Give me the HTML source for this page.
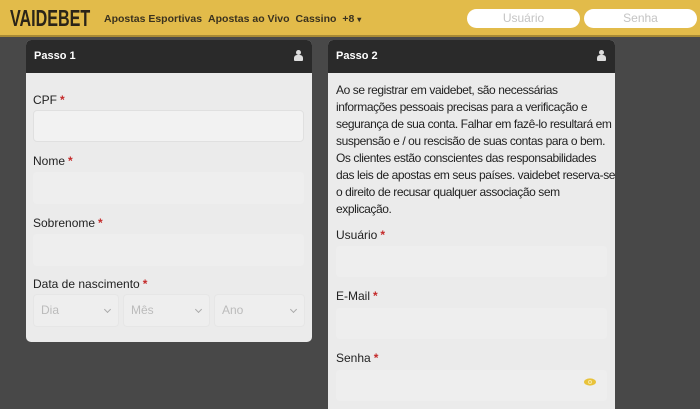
<!DOCTYPE html>
<html><head><style>
*{box-sizing:border-box;margin:0;padding:0}
html,body{width:700px;height:409px;overflow:hidden}
body{background:#484848;font-family:"Liberation Sans",Arial,sans-serif;position:relative}
.hdr{position:absolute;left:0;top:0;width:700px;height:37px;background:#e2bb4a;border-bottom:2px solid #a88a35}
.logo{position:absolute;left:10px;top:7px;font:bold 23px/23px "Liberation Sans",sans-serif;color:#2a2418;transform:scaleX(0.7);transform-origin:left;white-space:nowrap}
.nav{position:absolute;left:104px;top:12px;font:bold 10.5px/14px "Liberation Sans",sans-serif;color:#3a321f;white-space:nowrap}
.nav span{margin-right:6px}
.hin{position:absolute;top:9px;height:19px;width:113px;background:#fff;border-radius:10px;color:#c4c4c4;font-size:12px;line-height:19px;text-align:center}
.panel{position:absolute;top:40px;background:#ebebeb;border-radius:5px;overflow:hidden}
.ph{height:33px;background:#2a2a2a;color:#fff;font:bold 11px/33px "Liberation Sans",sans-serif;padding-left:8px;position:relative}
.usr{position:absolute;right:9px;top:10px;width:9px;height:11px}
.usr:before{content:"";position:absolute;left:2px;top:0;width:5px;height:5px;border-radius:50%;background:#ddd}
.usr:after{content:"";position:absolute;left:0;top:5px;width:9px;height:6px;border-radius:3px 3px 1px 1px;background:#ddd}
.lbl{position:absolute;font-size:12px;color:#222}
.lbl b{color:#c42a2a;font-weight:bold;margin-left:3px}
.inp{position:absolute;background:#eeeeee;border-radius:4px}
.sel{position:absolute;top:254px;height:33px;background:#eeeeee;border:1px solid #e6e6e6;border-radius:4px;color:#bbb;font-size:12px;line-height:31px;padding-left:7px}
.sel:after{content:"";position:absolute;right:8px;top:12px;width:4px;height:4px;border-right:1px solid #aaa;border-bottom:1px solid #aaa;transform:rotate(45deg)}
.txt{position:absolute;left:8px;top:42px;width:290px;font-size:12px;letter-spacing:-0.42px;line-height:17px;color:#222;white-space:nowrap}
</style></head><body>
<div class="hdr">
<div class="logo">VAIDEBET</div>
<div class="nav"><span>Apostas Esportivas</span><span>Apostas ao Vivo</span><span>Cassino</span><span>+8 <small style="font-size:8px">&#9662;</small></span></div>
<div class="hin" style="left:467px">Usuário</div>
<div class="hin" style="left:584px">Senha</div>
</div>

<div class="panel" style="left:26px;width:286px;height:302px">
<div class="ph">Passo 1<div class="usr"></div></div>
<div class="lbl" style="left:7px;top:53px">CPF<b>*</b></div>
<div class="inp" style="left:7px;top:70px;width:271px;height:32px;background:#f2f2f2;border:1px solid #e0e0e0"></div>
<div class="lbl" style="left:7px;top:114px">Nome<b>*</b></div>
<div class="inp" style="left:7px;top:132px;width:271px;height:32px"></div>
<div class="lbl" style="left:7px;top:176px">Sobrenome<b>*</b></div>
<div class="inp" style="left:7px;top:194px;width:271px;height:32px"></div>
<div class="lbl" style="left:7px;top:237px">Data de nascimento<b>*</b></div>
<div class="sel" style="left:7px;width:86px">Dia</div>
<div class="sel" style="left:97px;width:87px">Mês</div>
<div class="sel" style="left:188px;width:91px">Ano</div>
</div>

<div class="panel" style="left:328px;width:287px;height:369px;border-radius:5px 5px 0 0">
<div class="ph">Passo 2<div class="usr"></div></div>
<div class="txt">Ao se registrar em vaidebet, são necessárias<br>informações pessoais precisas para a verificação e<br>segurança de sua conta. Falhar em fazê-lo resultará em<br>suspensão e / ou rescisão de suas contas para o bem.<br>Os clientes estão conscientes das responsabilidades<br>das leis de apostas em seus países. vaidebet reserva-se<br>o direito de recusar qualquer associação sem<br>explicação.</div>
<div class="lbl" style="left:8px;top:188px">Usuário<b>*</b></div>
<div class="inp" style="left:8px;top:206px;width:271px;height:31px"></div>
<div class="lbl" style="left:8px;top:249px">E-Mail<b>*</b></div>
<div class="inp" style="left:8px;top:268px;width:271px;height:31px"></div>
<div class="lbl" style="left:8px;top:311px">Senha<b>*</b></div>
<div class="inp" style="left:8px;top:330px;width:271px;height:31px"></div>
<svg style="position:absolute;left:256px;top:338px" width="12" height="8" viewBox="0 0 12 8"><ellipse cx="6" cy="4" rx="6" ry="3.6" fill="#e8c23a"/><circle cx="6" cy="4" r="2" fill="#f6e6a0"/><circle cx="6" cy="4" r="1" fill="#e8c23a"/></svg>
</div>
</body></html>
